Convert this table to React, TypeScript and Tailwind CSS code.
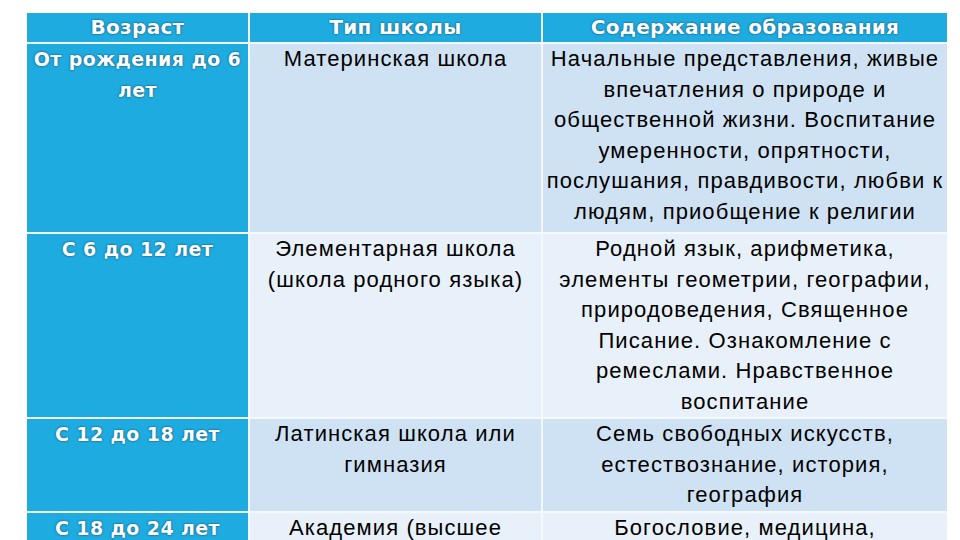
import React from 'react';

type Row = { age: string[]; school: string[]; content: string[]; tone: string; pad: string };

const rows: Row[] = [
    {
        age: ['От рождения до 6', 'лет'],
        school: ['Материнская школа'],
        content: [
            'Начальные представления, живые',
            'впечатления о природе и',
            'общественной жизни. Воспитание',
            'умеренности, опрятности,',
            'послушания, правдивости, любви к',
            'людям, приобщение к религии'
        ],
        tone: 'bg-[#cfe2f3]',
        pad: 'pb-[5px]'
    },
    {
        age: ['С 6 до 12 лет'],
        school: ['Элементарная школа', '(школа родного языка)'],
        content: [
            'Родной язык, арифметика,',
            'элементы геометрии, географии,',
            'природоведения, Священное',
            'Писание. Ознакомление с',
            'ремеслами. Нравственное',
            'воспитание'
        ],
        tone: 'bg-[#e8f1f9]',
        pad: 'pb-0'
    },
    {
        age: ['С 12 до 18 лет'],
        school: ['Латинская школа или', 'гимназия'],
        content: ['Семь свободных искусств,', 'естествознание, история,', 'география'],
        tone: 'bg-[#cfe2f3]',
        pad: 'pb-0'
    },
    {
        age: ['С 18 до 24 лет'],
        school: ['Академия (высшее', 'школа)'],
        content: ['Богословие, медицина,', 'юриспруденция'],
        tone: 'bg-[#e8f1f9]',
        pad: 'pb-0'
    }
];

const Lines = ({ items }: { items: string[] }) => (
    <>
        {items.map((t) => (
            <div key={t} className="whitespace-nowrap">
                {t}
            </div>
        ))}
    </>
);

export default function App() {
    const head =
        "bg-[#1eabe0] text-center text-white font-bold text-[20px] leading-[29px] tracking-[0.3px] font-['DejaVu_Sans',sans-serif] [text-shadow:0_0_2px_rgba(0,40,70,0.9)]";
    const body = 'text-center text-[22px] leading-[30.5px] tracking-[1.1px] text-black';
    return (
        <div className="h-[540px] w-[960px] overflow-hidden bg-white pl-[27px] pt-[13px] font-['Liberation_Sans',Arial,sans-serif]">
            <div className="grid w-[920px] grid-cols-[221px_291px_404px] gap-[2px] bg-[#f4f9fd]">
                <div className={head}>Возраст</div>
                <div className={head}>Тип школы</div>
                <div className={head}>Содержание образования</div>
                {rows.map((r) => (
                    <React.Fragment key={r.age[0]}>
                        <div className={`bg-[#1eabe0] ${r.pad} text-center font-['DejaVu_Sans',sans-serif] text-[19px] font-bold leading-[30.5px] tracking-[0.4px] text-white [text-shadow:0_0_2px_rgba(0,40,70,0.9)]`}>
                            <Lines items={r.age} />
                        </div>
                        <div className={`${r.tone} ${r.pad} ${body}`}>
                            <Lines items={r.school} />
                        </div>
                        <div className={`${r.tone} ${r.pad} ${body}`}>
                            <Lines items={r.content} />
                        </div>
                    </React.Fragment>
                ))}
            </div>
        </div>
    );
}
